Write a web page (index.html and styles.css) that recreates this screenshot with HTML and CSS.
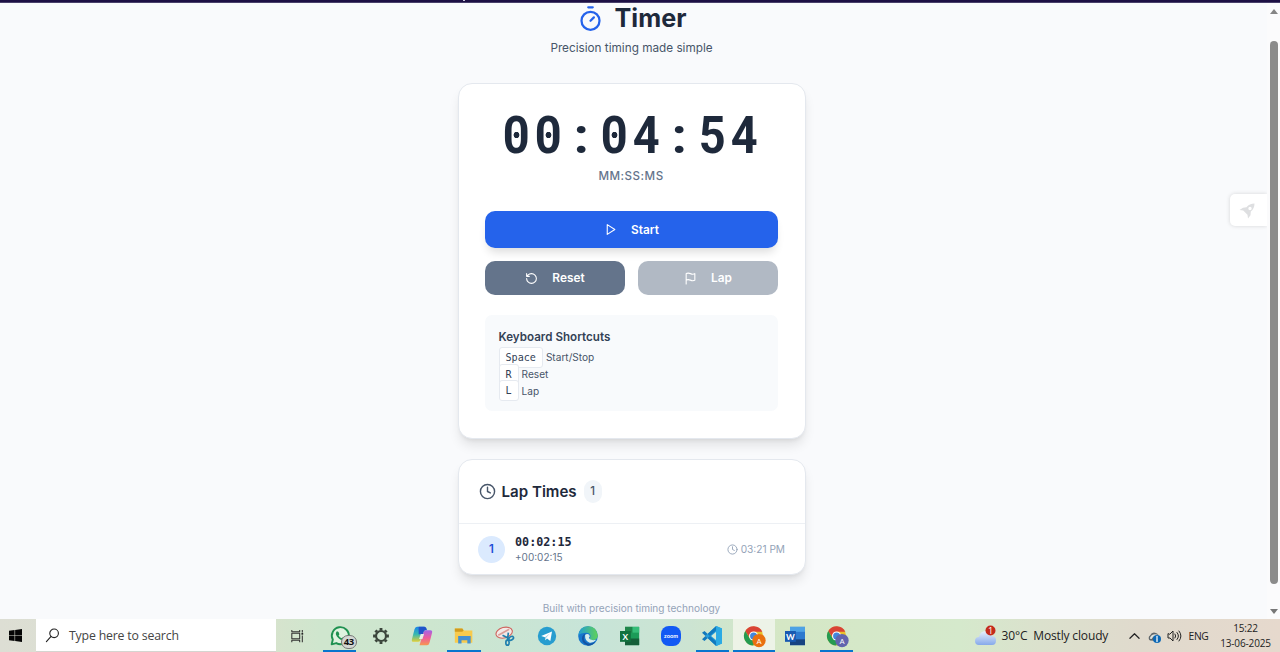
FILE: index.html
```html
<!DOCTYPE html>
<html lang="en">
<head>
<meta charset="utf-8">
<title>Timer</title>
<link rel="stylesheet" href="styles.css">
</head>
<body>
<div class="strip"><span class="strip-mark"></span></div>
<div class="viewport">
  <main class="page">
    <header class="header">
      <h1 class="title">
        <svg class="logo" viewBox="0 0 24 24"><path d="M10 2h4M12 14l3-3"/><circle cx="12" cy="14" r="8"/></svg>
        <span>Timer</span>
      </h1>
      <p class="subtitle">Precision timing made simple</p>
    </header>
    <section class="card timer">
      <div class="time"><span class="zero">0</span><span class="zero">0</span><span class="colon">:</span><span class="zero">0</span><span>4</span><span class="colon">:</span><span>5</span><span>4</span></div>
      <div class="units">MM:SS:MS</div>
      <button class="btn start"><svg viewBox="0 0 24 24"><path d="M6 3l14 9-14 9z"/></svg><span>Start</span></button>
      <div class="row">
        <button class="btn reset"><svg viewBox="0 0 24 24"><path d="M3 12a9 9 0 1 0 9-9 9.750 9.750 0 0 0-6.740 2.740L3 8M3 3v5h5"/></svg><span>Reset</span></button>
        <button class="btn lap"><svg viewBox="0 0 24 24"><path d="M4 15s1-1 4-1 5 2 8 2 4-1 4-1V3s-1 1-4 1-5-2-8-2-4 1-4 1zM4 22v-7"/></svg><span>Lap</span></button>
      </div>
      <div class="shortcuts">
        <h2>Keyboard Shortcuts</h2>
        <div class="key-row"><kbd>Space</kbd><span>Start/Stop</span></div>
        <div class="key-row"><kbd>R</kbd><span>Reset</span></div>
        <div class="key-row"><kbd>L</kbd><span>Lap</span></div>
      </div>
    </section>
    <section class="card laps">
      <div class="laps-head">
        <svg viewBox="0 0 24 24"><circle cx="12" cy="12" r="10"/><path d="M12 6v6l4 2"/></svg>
        <h2>Lap Times</h2><span class="count">1</span>
      </div>
      <div class="lap-item">
        <span class="num">1</span>
        <div class="lap-time"><div class="total">00:02:15</div><div class="delta">+00:02:15</div></div>
        <div class="stamp"><svg viewBox="0 0 24 24"><circle cx="12" cy="12" r="10"/><path d="M12 6v6l4 2"/></svg><span>03:21 PM</span></div>
      </div>
    </section>
    <footer class="footer">Built with precision timing technology</footer>
  </main>
  <div class="side">
    <svg viewBox="0 0 16 16"><path fill-rule="evenodd" d="M15.500.5Q10.500.5 7.500 4.200L4 4.700.5 7l3.700.5 4.300 4.300.5 3.700 2.500-3.200.3-3.800Q15.500 5.500 15.500.5zM11 3.800a1.700 1.700 0 1 1 0 3.400 1.700 1.700 0 0 1 0-3.400z"/></svg>
  </div>
  <div class="scroll"><i class="up"></i><div class="thumb"></div><i class="down"></i></div>
</div>
<div class="taskbar">
  <div class="win"><svg viewBox="0 0 14 14"><path d="M0 2l6-.9v5.500H0zM6.600 1L14 0v6.600H6.600zM0 7.300h6v5.600L0 12zM6.600 7.300H14V14l-7.400-1z"/></svg></div>
  <div class="search"><svg viewBox="0 0 16 16"><circle cx="9.700" cy="5.700" r="4.600"/><path d="M6.500 9L1.500 14.500"/></svg><span>Type here to search</span></div>
  <div class="taskview"><svg viewBox="0 0 16 16"><path d="M1.500 1v2.200h9V1M1.500 15v-2.200h9V15M1.500 4.800h9v6.400h-9zM13.500 1v3M13.500 7.500V15"/><path class="dot" d="M12.500 4.500h2v2h-2z"/></svg></div>
  <div class="apps">
    <div class="app open"><svg viewBox="0 0 24 24"><path d="M2 22l1.400-5.700A10.200 10.200 0 1 1 7.500 20.500z" fill="#dff3df" stroke="#1f9150" stroke-width="2.300"/><path d="M8 6.500c-2 2-1 5 2 8s6.500 3.500 8 1.500c1-1.500-1-2.500-2.500-2.500l-1.500 1.300q-2.500-1-3.700-3.500l1-1.300Q10.500 6 8 6.500z" fill="#1f9150"/></svg><b class="badge">43</b></div>
    <div class="app"><svg viewBox="0 0 24 24"><circle cx="12" cy="12" r="6" fill="none" stroke="#3b453b" stroke-width="2.600"/><path d="M12 2.500v3M12 18.500v3M2.500 12h3M18.500 12h3M5.300 5.300l2 2M16.700 16.700l2 2M18.700 5.300l-2 2M7.300 16.700l-2 2" stroke="#3b453b" stroke-width="3.400"/></svg></div>
    <div class="app"><svg viewBox="0 0 24 24"><defs><linearGradient id="cpa" x1="0" y1="0" x2="0" y2="1"><stop offset="0" stop-color="#1b86e8"/><stop offset=".5" stop-color="#35b9b0"/><stop offset="1" stop-color="#e3cf36"/></linearGradient><linearGradient id="cpb" x1="0" y1="0" x2="0" y2="1"><stop offset="0" stop-color="#a263e8"/><stop offset=".5" stop-color="#ed5c9d"/><stop offset="1" stop-color="#f79750"/></linearGradient></defs><path d="M6 1h9l-5 16q-.6 2-3 2H2q-3 0-2-3.500L3 4q.8-3 3-3z" fill="url(#cpa)"/><path d="M18 23H9l5-16q.6-2 3-2h5q3 0 2 3.500L21 20q-.8 3-3 3z" fill="url(#cpb)"/><path d="M8 1h7q2 0 3 4-3-.5-4 2l-1 3H8z" fill="#2054ca"/><path d="M10.500 9.500h4l-2 6h-4z" fill="#e6eee5"/></svg></div>
    <div class="app open"><svg viewBox="0 0 24 24"><path d="M1 3h9l2 2.500h10V20H1z" fill="#f8ca4c"/><path d="M1 3h9l1.500 2.500L10 7H1z" fill="#d19b1e"/><path d="M5 21v-9h15v9h-4v-4H9v4z" fill="#4490d1"/></svg></div>
    <div class="app"><svg viewBox="0 0 24 24"><ellipse cx="11" cy="8" rx="10" ry="6.300" transform="rotate(-15 11 8)" fill="#f3e9e7" stroke="#cf625d" stroke-width="1.300"/><path d="M4 11l13-7" stroke="#d99c97"/><g fill="none" stroke="#207fae" stroke-width="2"><path d="M9 11l8 4M16 8l-1 9"/><ellipse cx="19.500" cy="15" rx="3" ry="2" transform="rotate(-30 19 15)"/><ellipse cx="15" cy="20" rx="2" ry="3"/></g></svg></div>
    <div class="app"><svg viewBox="0 0 24 24"><circle cx="12" cy="12" r="11" fill="#279dcf"/><path d="M5 12l13-5.500L16 18l-4-3-2 2-.5-3.500z" fill="#fff"/><path d="M9.500 13.500l6-4.500-4.500 5-1 3z" fill="#9fcfe5"/></svg></div>
    <div class="app"><svg viewBox="0 0 24 24"><defs><linearGradient id="edg"><stop stop-color="#1f9cd5"/><stop offset="1" stop-color="#60d257"/></linearGradient></defs><circle cx="12" cy="12" r="11.800" fill="#1677cd"/><path d="M.3 11Q2 .2 12 .2T23.800 11q0 6-7 6-4-.5-2-3.500 1-5.500-5-5.500Q3 8 .3 11z" fill="url(#edg)"/><path d="M8.500 10.500q2.500-2 5 0 1.500 2-.5 4 2 3.500 9 2-3.500 4-8 3.500-6-2-5.500-9.500z" fill="#d6eceb"/><path d="M9.500 9q-4 4-1.500 9 4 6 13 1-3.500 4.700-9 4.800Q3 20 5 13q1.500-3.500 4.500-4z" fill="#1454a2"/></svg></div>
    <div class="app"><svg viewBox="0 0 24 24"><path d="M6 1h17v22H6z" fill="#1b9b58"/><path d="M6 1h9v7H6z" fill="#20854a"/><path d="M15 1h8v7h-8z" fill="#35bd78"/><path d="M6 15h17v8H6z" fill="#155f39"/><path d="M0 6h13v13H0z" fill="#11713e"/><text x="6.500" y="16.500" class="letter">X</text></svg></div>
    <div class="app"><svg viewBox="0 0 24 24"><rect width="24" height="24" rx="9.500" fill="#1259f4"/><text x="12" y="14" class="zoom">zoom</text></svg></div>
    <div class="app open"><svg viewBox="0 0 24 24"><path d="M17 0l7 3v18l-7 3L4 12z" fill="#219fdf"/><path d="M17 7v10l-6-5z" fill="#d3e9d5"/><path d="M0 8l3-2 14 13v5zM0 16l3 2L17 5V0z" fill="#1279bd"/><path d="M17 0l7 3v18l-7 3z" fill="#2baae4"/></svg></div>
    <div class="app open active"><svg viewBox="0 0 24 24"><circle cx="11.500" cy="12" r="11.500" fill="#e9bf2b"/><path d="M1.500 6A11.500 11.500 0 0 1 22 7H11.500l-4.500 7z" fill="#d94335"/><path d="M1.500 6A11.500 11.500 0 0 0 11 23.500l4-8.500H7z" fill="#269b51"/><circle cx="11.500" cy="12" r="5.500" fill="#fff"/><circle cx="11.500" cy="12" r="4.200" fill="#4286dc"/><circle cx="18" cy="17.500" r="8" fill="#e9700f"/><text x="18" y="21" class="avatar">A</text></svg></div>
    <div class="app"><svg viewBox="0 0 24 24"><path d="M6 1h18v22H6z" fill="#2c79cf"/><path d="M6 1h18v6H6z" fill="#4da2e5"/><path d="M6 16h18v7H6z" fill="#174381"/><path d="M0 6h13v13H0z" fill="#1859b1"/><text x="6.500" y="16.500" class="letter">W</text></svg></div>
    <div class="app open"><svg viewBox="0 0 24 24"><circle cx="11.500" cy="12" r="11.500" fill="#e9bf2b"/><path d="M1.500 6A11.500 11.500 0 0 1 22 7H11.500l-4.500 7z" fill="#d94335"/><path d="M1.500 6A11.500 11.500 0 0 0 11 23.500l4-8.500H7z" fill="#269b51"/><circle cx="11.500" cy="12" r="5.500" fill="#fff"/><circle cx="11.500" cy="12" r="4.200" fill="#4286dc"/><circle cx="18" cy="17.500" r="8" fill="#6264ae"/><text x="18" y="21" class="avatar">A</text></svg></div>
  </div>
  <div class="tray">
    <svg class="cloud" viewBox="0 0 22 22"><defs><linearGradient id="cl" x1="0" y1="0" x2="0" y2="1"><stop stop-color="#e9f0fc"/><stop offset="1" stop-color="#85a9ea"/></linearGradient></defs><path d="M4 20a4 4 0 0 1 0-8q1-6 7-6 5 0 6 5 4 0 4 4.500T17 20z" fill="url(#cl)"/><circle cx="15.500" cy="5.500" r="5" fill="#c42b1c"/><text x="15.500" y="8.700" class="alert">1</text></svg>
    <span class="weather">30°C&nbsp; Mostly cloudy</span>
    <svg class="chev" viewBox="0 0 12 8"><path d="M1 6.500l5-5 5 5"/></svg>
    <svg class="drive" viewBox="0 0 14 12"><path d="M3 9.500a3 3 0 0 1 0-5Q5 .5 9 2q2 .5 3 3v5z" fill="#60676b"/><path d="M4 7q2-4 7-2" stroke="#dce1dd" fill="none"/><circle cx="10" cy="8" r="4" fill="#0c68b5"/><path d="M10 7.500v3M10 5.300v1.200" stroke="#fff" stroke-width="1.300"/></svg>
    <svg class="sound" viewBox="0 0 15 12"><path d="M1 4v4h2l3 3V1L3 4zM8 4q1.500 2 0 4M10 2.500q3 3.500 0 7M12 1q4 5 0 10"/></svg>
    <span class="lang">ENG</span>
    <div class="clock"><span>15:22</span><span>13-06-2025</span></div>
  </div>
</div>
</body>
</html>
```

FILE: styles.css
```css
* { box-sizing: border-box; }
body { margin: 0; height: 652px; overflow: hidden; display: flex; flex-direction: column; font-family: Inter, sans-serif; color: #1e293b; background: #f9fafc; }
h1, h2, p { margin: 0; }
svg { display: block; flex: none; fill: none; stroke: currentColor; stroke-width: 2; stroke-linecap: round; stroke-linejoin: round; }
.strip { height: 3px; background: #1d1044; border-bottom: 1px solid #49406b; flex: none; }
.strip-mark { display: block; width: 2px; height: 1px; margin-left: 463px; background: #c9c4dc; }
.viewport { height: 616px; flex: none; overflow: hidden; display: flex; position: relative; background: #f9fafc; }
.page { width: 348px; margin-left: 458px; }

.header { height: 80px; padding-right: 1px; }
.title { display: flex; justify-content: center; align-items: center; gap: 11px; height: 30px; font-size: 25.200px; line-height: 30px; font-weight: 700; }
.logo { width: 27px; height: 27px; color: #2563eb; }
.subtitle { text-align: center; margin-top: 6px; font-size: 11.750px; line-height: 18px; color: #475569; }

.card { background: #fff; border: 1px solid #e4e8ee; border-radius: 14px; box-shadow: 0 8px 12px -2px rgba(0,0,0,.10), 0 3px 5px -3px rgba(0,0,0,.10); }
.timer { height: 356px; padding: 26px; }
.time { height: 53px; width: 261.200px; margin-left: 14.700px; display: grid; grid-template-columns: repeat(8, 1fr); font: 700 51px/52px Roboto, sans-serif; }
.time span { text-align: center; transform: scaleX(.920); }
.zero { background: radial-gradient(circle at 50% 25px, #1e293b 2.800px, transparent 3.500px); }
.time .colon { transform: scale(1.080, .970); }
.units { text-align: center; font-size: 11.600px; line-height: 18px; letter-spacing: .5px; font-weight: 500; color: #64748b; margin-top: 4px; padding-right: 2px; }
.btn { border: 0; border-radius: 10px; padding: 0; color: #fff; font: 600 11.850px/18px Inter, sans-serif; display: flex; align-items: center; justify-content: center; gap: 14px; }
.btn svg { width: 13px; height: 13px; }
.start { width: 293px; height: 37px; margin-top: 26px; background: #2563eb; box-shadow: 0 7px 10px -3px rgba(0,0,0,.14); }
.row { display: grid; grid-template-columns: 1fr 1fr; gap: 13px; margin-top: 13px; width: 293px; }
.row .btn { height: 34px; }
.reset { background: #64748b; }
.lap { background: #b1b9c4; }
.shortcuts { margin-top: 20px; width: 293px; height: 96px; border-radius: 7px; background: #f8fafc; padding: 13px 13.500px; }
.shortcuts h2 { font-size: 11.600px; line-height: 18px; font-weight: 600; color: #334155; margin-bottom: 3px; letter-spacing: .02px; }
.key-row { height: 16.700px; display: flex; align-items: center; gap: 3px; font-size: 10.100px; color: #475569; }
kbd { flex: none; height: 21px; border: 1px solid #e6eaf0; border-radius: 3px; background: #fff; padding: 0 6px; font: 10.100px/19px "DejaVu Sans Mono", monospace; color: #334155; }

.laps { margin-top: 20px; height: 116px; overflow: visible; }
.laps-head { height: 64px; padding: 0 19.500px; border-bottom: 1px solid #edf0f4; display: flex; align-items: center; }
.laps-head svg { width: 17px; height: 17px; color: #475569; }
.laps-head h2 { font-size: 15.100px; line-height: 22px; font-weight: 600; margin-left: 6px; }
.count { width: 18px; height: 23px; border-radius: 9px; background: #f1f5f9; margin-left: 7px; font-size: 11.500px; line-height: 23px; font-weight: 500; text-align: center; color: #475569; }
.lap-item { height: 50px; padding: 0 20px 0 19px; display: flex; align-items: center; }
.num { width: 27px; height: 27px; border-radius: 50%; background: #dbeafe; color: #1d4ed8; font-size: 11.500px; line-height: 27px; font-weight: 600; text-align: center; }
.lap-time { margin-left: 10px; }
.total { font: 700 11.750px/15px "DejaVu Sans Mono", monospace; }
.delta { font-size: 10px; line-height: 14px; color: #64748b; }
.stamp { margin-left: auto; display: flex; align-items: center; gap: 3px; font-size: 10.150px; color: #94a3b8; }
.stamp svg { width: 11px; height: 11px; }
.footer { margin-top: 25px; padding-right: 1px; text-align: center; font-size: 10.050px; line-height: 16px; color: #94a3b8; }

.side { margin-left: auto; margin-top: 191px; width: 37px; height: 32px; background: #fff; border-radius: 5px 0 0 5px; box-shadow: 0 0 4px rgba(0,0,0,.15); display: flex; align-items: center; padding-left: 9px; }
.side svg { width: 16px; height: 16px; margin-top: 2px; fill: #dedfe1; stroke: none; }
.scroll { width: 13px; background: #fbfbfc; display: flex; flex-direction: column; align-items: center; padding: 6px 0 0 1px; }
.up, .down { width: 0; border: solid transparent; border-width: 0 4.500px 5px; border-bottom-color: #858585; }
.thumb { width: 8px; height: 543px; margin: 27px 0 25px; border-radius: 4px; background: #8b8b8b; }
.down { border-width: 5px 4.500px 0; border-top-color: #777; }

.taskbar { height: 33px; flex: none; display: flex; font-family: "Open Sans", "Noto Sans", sans-serif; color: #222; background: linear-gradient(90deg, #ddded4 0, #d7e3cd 270px, #cfe6ce 320px, #cde6cf 430px, #c7e4d8 590px, #cce4d2 690px, #d5e7c5 780px, #d5e9cc 960px, #dbe1cd 1040px, #e0dacd 1140px, #e6d9cd 1280px); }
.win { width: 36px; display: grid; place-items: center; padding-right: 5px; }
.win svg { width: 13px; height: 13px; fill: #050505; stroke: none; }
.search { width: 240px; background: #fff; border-bottom: 1px solid #d5d5d0; display: flex; align-items: center; font-size: 12.300px; color: #444; }
.search svg { width: 15px; height: 15px; margin: 0 9px; stroke-width: 1.200; color: #222; }
.search span { letter-spacing: -.18px; }
.taskview { width: 42.800px; display: grid; place-items: center; }
.taskview svg { width: 15px; height: 14px; stroke-width: 1.200; color: #333; stroke-linecap: butt; }
.dot { fill: #222; stroke: none; }
.apps { display: flex; }
.app { position: relative; width: 41.450px; height: 33px; display: grid; place-items: center; }
.app svg { width: 20px; height: 20px; stroke: none; overflow: visible; stroke-linecap: butt; }
.app.open::after { content: ""; position: absolute; bottom: 0; left: 4px; right: 4px; height: 2px; background: #0875ce; }
.app.active { background: #edf3e7; }
.app.active::after { left: 0; right: 0; }
.badge { position: absolute; left: 22px; top: 16px; width: 16px; height: 14px; border: 1px solid #777; border-radius: 7px; background: #d3d7d3; color: #111; font-size: 9.500px; line-height: 12px; text-align: center; letter-spacing: -.3px; }
.letter { font: 700 10px Lato, sans-serif; fill: #fff; text-anchor: middle; }
.zoom { font: 700 6.800px Lato, sans-serif; fill: #fff; text-anchor: middle; }
.avatar { font: 9.500px Roboto, sans-serif; fill: #fff; text-anchor: middle; }
.tray { margin-left: auto; display: flex; align-items: center; width: 305px; border-right: 0; }
.cloud { width: 22px; height: 22px; stroke: none; }
.alert { font: 9px "Open Sans", sans-serif; fill: #fff; text-anchor: middle; }
.weather { width: 107px; margin-left: 4.500px; font-size: 12px; letter-spacing: -.15px; white-space: nowrap; }
.chev { width: 11px; height: 8px; margin-left: 20px; stroke-width: 1.300; }
.drive { width: 14px; height: 12px; margin-left: 7px; stroke: none; margin-top: 2px; }
.sound { width: 15px; height: 12px; margin-left: 6px; stroke-width: 1; }
.lang { margin-left: 7px; width: 23px; font-size: 10.300px; letter-spacing: -.3px; }
.clock { margin-left: 6px; width: 56px; display: flex; flex-direction: column; align-items: center; font-size: 10px; line-height: 15px; letter-spacing: -.15px; white-space: nowrap; }
```
